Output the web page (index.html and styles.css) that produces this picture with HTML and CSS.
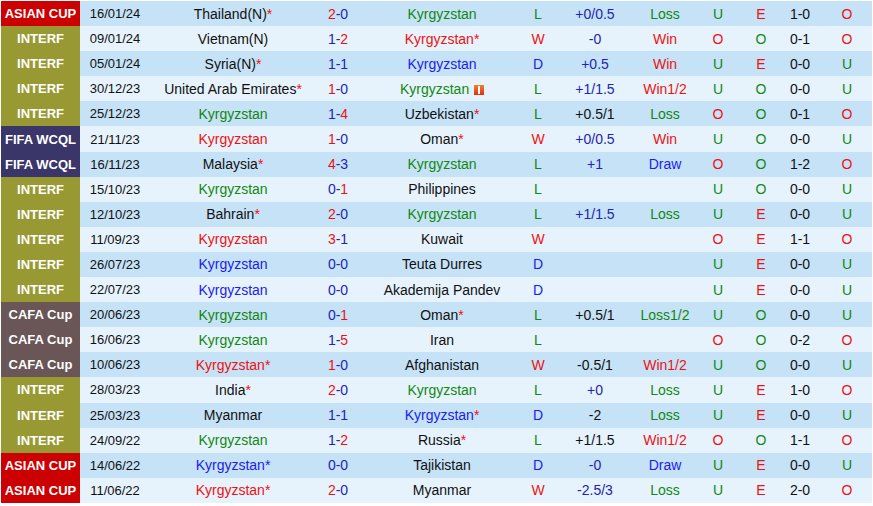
FILE: index.html
```html
<!DOCTYPE html>
<html>
<head>
<meta charset="utf-8">
<link rel="stylesheet" href="styles.css">
</head>
<body>
<table class="matches">
<colgroup>
<col class="c-lg"><col class="c-dt"><col class="c-home"><col class="c-sc"><col class="c-away"><col class="c-res"><col class="c-hc"><col class="c-hr"><col class="c-ou"><col class="c-oe"><col class="c-ht"><col class="c-last">
</colgroup>
<tbody>
<tr><td class="lg asian">ASIAN CUP</td><td class="dt">16/01/24</td><td>Thailand(N)<span class="ast">*</span></td><td class="sc"><span class="w">2</span>-0</td><td class="g">Kyrgyzstan</td><td class="g">L</td><td class="b">+0/0.5</td><td class="g">Loss</td><td class="g">U</td><td class="r">E</td><td>1-0</td><td class="r">O</td></tr>
<tr><td class="lg interf">INTERF</td><td class="dt">09/01/24</td><td>Vietnam(N)</td><td class="sc">1-<span class="w">2</span></td><td class="r">Kyrgyzstan*</td><td class="r">W</td><td class="b">-0</td><td class="r">Win</td><td class="r">O</td><td class="g">O</td><td>0-1</td><td class="r">O</td></tr>
<tr><td class="lg interf">INTERF</td><td class="dt">05/01/24</td><td>Syria(N)<span class="ast">*</span></td><td class="sc">1-1</td><td class="b2">Kyrgyzstan</td><td class="b2">D</td><td class="b">+0.5</td><td class="r">Win</td><td class="g">U</td><td class="r">E</td><td>0-0</td><td class="g">U</td></tr>
<tr><td class="lg interf">INTERF</td><td class="dt">30/12/23</td><td>United Arab Emirates<span class="ast">*</span></td><td class="sc"><span class="w">1</span>-0</td><td class="g">Kyrgyzstan <span class="card"></span></td><td class="g">L</td><td class="b">+1/1.5</td><td class="r">Win1/2</td><td class="g">U</td><td class="g">O</td><td>0-0</td><td class="g">U</td></tr>
<tr><td class="lg interf">INTERF</td><td class="dt">25/12/23</td><td class="g">Kyrgyzstan</td><td class="sc">1-<span class="w">4</span></td><td>Uzbekistan<span class="ast">*</span></td><td class="g">L</td><td class="k">+0.5/1</td><td class="g">Loss</td><td class="r">O</td><td class="g">O</td><td>0-1</td><td class="r">O</td></tr>
<tr><td class="lg wcql">FIFA WCQL</td><td class="dt">21/11/23</td><td class="r">Kyrgyzstan</td><td class="sc"><span class="w">1</span>-0</td><td>Oman<span class="ast">*</span></td><td class="r">W</td><td class="b">+0/0.5</td><td class="r">Win</td><td class="g">U</td><td class="g">O</td><td>0-0</td><td class="g">U</td></tr>
<tr><td class="lg wcql">FIFA WCQL</td><td class="dt">16/11/23</td><td>Malaysia<span class="ast">*</span></td><td class="sc"><span class="w">4</span>-3</td><td class="g">Kyrgyzstan</td><td class="g">L</td><td class="b">+1</td><td class="b2">Draw</td><td class="r">O</td><td class="g">O</td><td>1-2</td><td class="r">O</td></tr>
<tr><td class="lg interf">INTERF</td><td class="dt">15/10/23</td><td class="g">Kyrgyzstan</td><td class="sc">0-<span class="w">1</span></td><td>Philippines</td><td class="g">L</td><td></td><td></td><td class="g">U</td><td class="g">O</td><td>0-0</td><td class="g">U</td></tr>
<tr><td class="lg interf">INTERF</td><td class="dt">12/10/23</td><td>Bahrain<span class="ast">*</span></td><td class="sc"><span class="w">2</span>-0</td><td class="g">Kyrgyzstan</td><td class="g">L</td><td class="b">+1/1.5</td><td class="g">Loss</td><td class="g">U</td><td class="r">E</td><td>0-0</td><td class="g">U</td></tr>
<tr><td class="lg interf">INTERF</td><td class="dt">11/09/23</td><td class="r">Kyrgyzstan</td><td class="sc"><span class="w">3</span>-1</td><td>Kuwait</td><td class="r">W</td><td></td><td></td><td class="r">O</td><td class="r">E</td><td>1-1</td><td class="r">O</td></tr>
<tr><td class="lg interf">INTERF</td><td class="dt">26/07/23</td><td class="b2">Kyrgyzstan</td><td class="sc">0-0</td><td>Teuta Durres</td><td class="b2">D</td><td></td><td></td><td class="g">U</td><td class="r">E</td><td>0-0</td><td class="g">U</td></tr>
<tr><td class="lg interf">INTERF</td><td class="dt">22/07/23</td><td class="b2">Kyrgyzstan</td><td class="sc">0-0</td><td>Akademija Pandev</td><td class="b2">D</td><td></td><td></td><td class="g">U</td><td class="r">E</td><td>0-0</td><td class="g">U</td></tr>
<tr><td class="lg cafa">CAFA Cup</td><td class="dt">20/06/23</td><td class="g">Kyrgyzstan</td><td class="sc">0-<span class="w">1</span></td><td>Oman<span class="ast">*</span></td><td class="g">L</td><td class="k">+0.5/1</td><td class="g">Loss1/2</td><td class="g">U</td><td class="g">O</td><td>0-0</td><td class="g">U</td></tr>
<tr><td class="lg cafa">CAFA Cup</td><td class="dt">16/06/23</td><td class="g">Kyrgyzstan</td><td class="sc">1-<span class="w">5</span></td><td>Iran</td><td class="g">L</td><td></td><td></td><td class="r">O</td><td class="g">O</td><td>0-2</td><td class="r">O</td></tr>
<tr><td class="lg cafa">CAFA Cup</td><td class="dt">10/06/23</td><td class="r">Kyrgyzstan*</td><td class="sc"><span class="w">1</span>-0</td><td>Afghanistan</td><td class="r">W</td><td class="k">-0.5/1</td><td class="r">Win1/2</td><td class="g">U</td><td class="g">O</td><td>0-0</td><td class="g">U</td></tr>
<tr><td class="lg interf">INTERF</td><td class="dt">28/03/23</td><td>India<span class="ast">*</span></td><td class="sc"><span class="w">2</span>-0</td><td class="g">Kyrgyzstan</td><td class="g">L</td><td class="b">+0</td><td class="g">Loss</td><td class="g">U</td><td class="r">E</td><td>1-0</td><td class="r">O</td></tr>
<tr><td class="lg interf">INTERF</td><td class="dt">25/03/23</td><td>Myanmar</td><td class="sc">1-1</td><td class="b2">Kyrgyzstan<span class="ast">*</span></td><td class="b2">D</td><td class="k">-2</td><td class="g">Loss</td><td class="g">U</td><td class="r">E</td><td>0-0</td><td class="g">U</td></tr>
<tr><td class="lg interf">INTERF</td><td class="dt">24/09/22</td><td class="g">Kyrgyzstan</td><td class="sc">1-<span class="w">2</span></td><td>Russia<span class="ast">*</span></td><td class="g">L</td><td class="k">+1/1.5</td><td class="r">Win1/2</td><td class="r">O</td><td class="g">O</td><td>1-1</td><td class="r">O</td></tr>
<tr><td class="lg asian">ASIAN CUP</td><td class="dt">14/06/22</td><td class="b2">Kyrgyzstan*</td><td class="sc">0-0</td><td>Tajikistan</td><td class="b2">D</td><td class="b">-0</td><td class="b2">Draw</td><td class="g">U</td><td class="r">E</td><td>0-0</td><td class="g">U</td></tr>
<tr><td class="lg asian">ASIAN CUP</td><td class="dt">11/06/22</td><td class="r">Kyrgyzstan*</td><td class="sc"><span class="w">2</span>-0</td><td>Myanmar</td><td class="r">W</td><td class="b">-2.5/3</td><td class="g">Loss</td><td class="g">U</td><td class="r">E</td><td>2-0</td><td class="r">O</td></tr>
</tbody>
</table>
</body>
</html>
```
FILE: styles.css
```css
html, body {
  margin: 0;
  padding: 0;
  background: #ffffff;
}
.matches {
  margin: 1px 0 0 1px;
  border-collapse: collapse;
  table-layout: fixed;
  width: 871px;
  font-family: "Liberation Sans", Arial, sans-serif;
  font-size: 14px;
  color: #111111;
}
.c-lg { width: 79px; }
.c-dt { width: 70px; }
.c-home { width: 166px; }
.c-sc { width: 44px; }
.c-away { width: 164px; }
.c-res { width: 28px; }
.c-hc { width: 86px; }
.c-hr { width: 54px; }
.c-ou { width: 52px; }
.c-oe { width: 34px; }
.c-ht { width: 44px; }
.c-last { width: 50px; }
.matches td {
  height: 25.1px;
  padding: 0;
  text-align: center;
  white-space: nowrap;
  overflow: hidden;
  vertical-align: middle;
}
.matches td.dt { font-size: 13px; }
.matches tr:nth-child(odd) td { background: #c6e2f6; }
.matches tr:nth-child(even) td { background: #e6f3fc; }
.matches tr td.lg {
  color: #ffffff;
  font-weight: bold;
  font-size: 13px;
}
.matches tr td.asian { background: #cc0000; }
.matches tr td.interf { background: #999933; }
.matches tr td.wcql { background: #3b3669; }
.matches tr td.cafa { background: #6a5656; }
.g { color: #118811; }
.r { color: #ee1111; }
.b { color: #2323b5; }
.b2 { color: #1c1cee; }
.k { color: #111111; }
.sc { color: #2323b5; }
.sc .w { color: #ee1111; }
.ast { color: #ee1111; }
.card {
  display: inline-block;
  width: 10px;
  height: 10px;
  margin-left: 1px;
  background: linear-gradient(#f08030, #e03010);
  position: relative;
  vertical-align: -1px;
}
.card::after {
  content: "";
  position: absolute;
  left: 4px;
  top: 1px;
  width: 2px;
  height: 8px;
  background: #ffffff;
}
```
